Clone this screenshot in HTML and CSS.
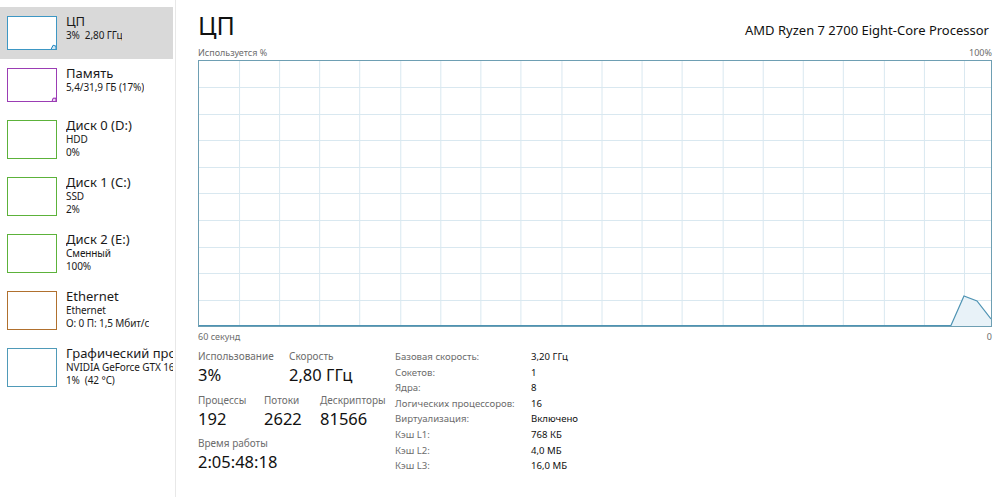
FILE: index.html
```html
<!DOCTYPE html>
<html lang="ru">
<head>
<meta charset="utf-8">
<title>Диспетчер задач — ЦП</title>
<link rel="stylesheet" href="styles.css">
</head>
<body>
<div class="app">
  <aside class="sidebar">
    <div class="item selected">
      <div class="thumb cpu short">
        <svg viewBox="0 0 50 34" preserveAspectRatio="none"><polyline points="45,34 47,30 50,31 50,34" fill="#d6e8f3" stroke="#117dbb" stroke-width="1"/></svg>
      </div>
      <div class="info"><div class="name">ЦП</div><div class="sub">3%&nbsp; 2,80 ГГц</div></div>
    </div>
    <div class="item">
      <div class="thumb mem short">
        <svg viewBox="0 0 50 34" preserveAspectRatio="none"><polyline points="46,34 47,31 50,31 50,34" fill="#eedcf2" stroke="#8b12ae" stroke-width="1"/></svg>
      </div>
      <div class="info"><div class="name">Память</div><div class="sub">5,4/31,9 ГБ (17%)</div></div>
    </div>
    <div class="item">
      <div class="thumb disk"></div>
      <div class="info"><div class="name">Диск 0 (D:)</div><div class="sub">HDD</div><div class="sub">0%</div></div>
    </div>
    <div class="item">
      <div class="thumb disk"></div>
      <div class="info"><div class="name">Диск 1 (C:)</div><div class="sub">SSD</div><div class="sub">2%</div></div>
    </div>
    <div class="item">
      <div class="thumb disk"></div>
      <div class="info"><div class="name">Диск 2 (E:)</div><div class="sub">Сменный</div><div class="sub">100%</div></div>
    </div>
    <div class="item">
      <div class="thumb eth"></div>
      <div class="info"><div class="name">Ethernet</div><div class="sub">Ethernet</div><div class="sub">О: 0 П: 1,5 Мбит/с</div></div>
    </div>
    <div class="item">
      <div class="thumb gpu"></div>
      <div class="info"><div class="name">Графический процессор 0</div><div class="sub">NVIDIA GeForce GTX 1650</div><div class="sub">1%&nbsp; (42 °C)</div></div>
    </div>
  </aside>

  <main class="main">
    <header class="head">
      <h1 class="title">ЦП</h1>
      <div class="model">AMD Ryzen 7 2700 Eight-Core Processor</div>
    </header>
    <div class="axis top"><span>Используется %</span><span>100%</span></div>
    <div class="graph">
      <svg viewBox="0 0 791 265" preserveAspectRatio="none">
        <g stroke="#d9e8f0" stroke-width="1">
          <line x1="40.5" y1="0" x2="40.5" y2="265"/>
          <line x1="80.5" y1="0" x2="80.5" y2="265"/>
          <line x1="120.5" y1="0" x2="120.5" y2="265"/>
          <line x1="160.5" y1="0" x2="160.5" y2="265"/>
          <line x1="201.5" y1="0" x2="201.5" y2="265"/>
          <line x1="241.5" y1="0" x2="241.5" y2="265"/>
          <line x1="281.5" y1="0" x2="281.5" y2="265"/>
          <line x1="321.5" y1="0" x2="321.5" y2="265"/>
          <line x1="362.5" y1="0" x2="362.5" y2="265"/>
          <line x1="402.5" y1="0" x2="402.5" y2="265"/>
          <line x1="442.5" y1="0" x2="442.5" y2="265"/>
          <line x1="482.5" y1="0" x2="482.5" y2="265"/>
          <line x1="523.5" y1="0" x2="523.5" y2="265"/>
          <line x1="563.5" y1="0" x2="563.5" y2="265"/>
          <line x1="603.5" y1="0" x2="603.5" y2="265"/>
          <line x1="643.5" y1="0" x2="643.5" y2="265"/>
          <line x1="684.5" y1="0" x2="684.5" y2="265"/>
          <line x1="724.5" y1="0" x2="724.5" y2="265"/>
          <line x1="764.5" y1="0" x2="764.5" y2="265"/>
          <line x1="0" y1="26.5" x2="791" y2="26.5"/>
          <line x1="0" y1="53.5" x2="791" y2="53.5"/>
          <line x1="0" y1="79.5" x2="791" y2="79.5"/>
          <line x1="0" y1="106.5" x2="791" y2="106.5"/>
          <line x1="0" y1="132.5" x2="791" y2="132.5"/>
          <line x1="0" y1="159.5" x2="791" y2="159.5"/>
          <line x1="0" y1="186.5" x2="791" y2="186.5"/>
          <line x1="0" y1="212.5" x2="791" y2="212.5"/>
          <line x1="0" y1="239.5" x2="791" y2="239.5"/>
        </g>
        <polygon points="751,265 764,235 777,240 791,258 791,265" fill="#e8f2f8"/>
        <polyline points="0,264.5 751,264.5 764,235 777,240 791,258" fill="none" stroke="#4e93b3" stroke-width="1.2"/>
      </svg>
    </div>
    <div class="axis bottom"><span>60 секунд</span><span>0</span></div>

    <section class="stats">
      <div class="live">
        <div class="row">
          <div class="stat w-usage"><div class="label">Использование</div><div class="value">3%</div></div>
          <div class="stat"><div class="label">Скорость</div><div class="value">2,80 ГГц</div></div>
        </div>
        <div class="row">
          <div class="stat w-proc"><div class="label">Процессы</div><div class="value">192</div></div>
          <div class="stat w-threads"><div class="label">Потоки</div><div class="value">2622</div></div>
          <div class="stat"><div class="label">Дескрипторы</div><div class="value">81566</div></div>
        </div>
        <div class="row">
          <div class="stat"><div class="label">Время работы</div><div class="value">2:05:48:18</div></div>
        </div>
      </div>
      <dl class="specs">
        <dt>Базовая скорость:</dt><dd>3,20 ГГц</dd>
        <dt>Сокетов:</dt><dd>1</dd>
        <dt>Ядра:</dt><dd>8</dd>
        <dt>Логических процессоров:</dt><dd>16</dd>
        <dt>Виртуализация:</dt><dd>Включено</dd>
        <dt>Кэш L1:</dt><dd>768 КБ</dd>
        <dt>Кэш L2:</dt><dd>4,0 МБ</dd>
        <dt>Кэш L3:</dt><dd>16,0 МБ</dd>
      </dl>
    </section>
  </main>
</div>
</body>
</html>
```

FILE: styles.css
```css
html, body {
  margin: 0;
  padding: 0;
  background: #ffffff;
}

body {
  font-family: "Noto Sans", "Segoe UI", sans-serif;
  color: #000;
  width: 1000px;
  height: 497px;
  overflow: hidden;
}

.app {
  display: flex;
  height: 497px;
}

/* ---------- sidebar ---------- */
.sidebar {
  width: 176px;
  flex: none;
  border-right: 1px solid #e8e8e8;
  padding-top: 7px;
  box-sizing: border-box;
  overflow: hidden;
}

.item {
  width: 173px;
  display: flex;
  align-items: flex-start;
  padding: 9px 0 9px 7px;
  box-sizing: border-box;
  overflow: hidden;
  white-space: nowrap;
}

.item.selected {
  background: #d9d9d9;
}

.thumb {
  flex: none;
  width: 50px;
  height: 39px;
  box-sizing: border-box;
  background: #fff;
  border: 1px solid #4da630;
  overflow: hidden;
  display: flex;
}

.thumb.short { height: 34px; }
.thumb svg { width: 100%; height: 100%; display: block; }

.thumb.cpu  { border-color: #3d97c4; }
.thumb.mem  { border-color: #9b3db4; }
.thumb.disk { border-color: #5cb23a; }
.thumb.eth  { border-color: #b0702e; }
.thumb.gpu  { border-color: #4f9ab8; }

.info {
  margin-left: 9px;
  margin-top: -3px;
  min-width: 0;
  overflow: hidden;
}

.name {
  font-size: 13px;
  line-height: 16px;
  color: #1a1a1a;
}

.sub {
  font-size: 10px;
  line-height: 13px;
  color: #1a1a1a;
  letter-spacing: -0.1px;
}

/* ---------- main ---------- */
.main {
  flex: 1;
  padding: 0 8px 0 22px;
  min-width: 0;
}

.head {
  display: flex;
  justify-content: space-between;
  align-items: baseline;
  height: 46px;
}

.title {
  margin: 0;
  font-weight: 400;
  font-size: 25px;
  line-height: 30px;
  padding-top: 10px;
  color: #111;
}

.model {
  font-size: 13px;
  color: #111;
  padding-right: 3px;
}

.axis {
  display: flex;
  justify-content: space-between;
  font-size: 9px;
  color: #6d6d6d;
  line-height: 14px;
}

.axis.top { height: 14px; }
.axis.bottom { padding-top: 3px; height: 16px; }

.graph {
  height: 267px;
  border: 1px solid #6e9fb3;
  box-sizing: border-box;
  display: flex;
}

.graph svg { width: 100%; height: 100%; display: block; }

/* ---------- stats ---------- */
.stats {
  display: flex;
  padding-top: 3px;
}

.live {
  width: 197px;
  flex: none;
}

.row {
  display: flex;
  height: 43.5px;
}

.stat { white-space: nowrap; }
.w-usage { width: 91px; }
.w-proc { width: 66px; }
.w-threads { width: 56px; }

.label {
  font-size: 10px;
  line-height: 14px;
  color: #6d6d6d;
}

.value {
  font-size: 16.5px;
  line-height: 24px;
  color: #111;
}

.specs {
  margin: 0;
  display: grid;
  grid-template-columns: 136px auto;
  grid-auto-rows: 15.6px;
  font-size: 9.6px;
  line-height: 15.6px;
  align-content: start;
}

.specs dt { color: #6d6d6d; }
.specs dd { margin: 0; color: #111; }
```
